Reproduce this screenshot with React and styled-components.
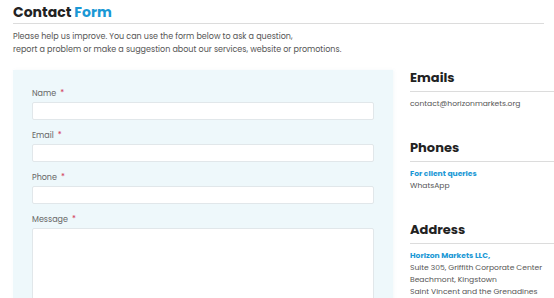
import React from "react";
import styled, { createGlobalStyle } from "styled-components";

const Global = createGlobalStyle`
  html, body { margin: 0; padding: 0; background: #fff; overflow: hidden; }
  body { font-family: "Poppins", "Inter", "Noto Sans", sans-serif; color: #555; }
  * { box-sizing: border-box; }
`;

const BLUE = "#1a98d5";

const Page = styled.div`
  width: 554px;
  height: 298px;
  padding: 4px 0 0 13px;
  overflow: hidden;
`;

const Header = styled.div`
  margin-right: 10px;
  border-bottom: 1px solid #dcdcdc;
  padding-bottom: 3px;
`;

const Title = styled.h1`
  margin: 0;
  font-size: 14px;
  line-height: 16px;
  font-weight: 700;
  color: #222;
`;

const Accent = styled.span`
  color: ${BLUE};
`;

const Intro = styled.p`
  margin: 6px 0 0;
  font-size: 8px;
  line-height: 13px;
  color: #555;
`;

const Columns = styled.div`
  display: flex;
  gap: 17px;
  margin-top: 14px;
`;

const FormPanel = styled.form`
  flex: 0 0 380px;
  height: 240px;
  background: #eef8fb;
  box-shadow: 1px 0 3px rgba(120, 160, 180, 0.08);
  padding: 18px 19px 0;
  display: flex;
  flex-direction: column;
  gap: 10px;
`;

const Field = styled.div`
  display: flex;
  flex-direction: column;
  gap: 2px;
`;

const Label = styled.label`
  font-size: 8px;
  line-height: 12px;
  color: #666;
`;

const Req = styled.span`
  color: #d23a5c;
  margin-left: 4px;
`;

const Input = styled.input`
  height: 18px;
  width: 100%;
  border: 1px solid #e1e7ea;
  border-radius: 2px;
  background: #fff;
  outline: none;
`;

const TextArea = styled.textarea`
  height: 90px;
  width: 100%;
  border: 1px solid #e1e7ea;
  border-radius: 2px;
  background: #fff;
  resize: none;
  outline: none;
`;

const Side = styled.aside`
  flex: 0 0 170px;
  display: flex;
  flex-direction: column;
  gap: 30px;
`;

const Section = styled.section``;

const SectionTitle = styled.h2`
  margin: 0;
  font-size: 13px;
  line-height: 16px;
  font-weight: 700;
  color: #222;
  padding-bottom: 4.5px;
  border-bottom: 1px solid #dcdcdc;
`;

const Body = styled.div`
  margin-top: 6.5px;
  font-size: 7.6px;
  line-height: 12px;
  color: #555;
`;

const Strong = styled.div`
  color: ${BLUE};
  font-weight: 700;
`;

const Line = styled.div``;

const fields = [
  { label: "Name", type: "text" },
  { label: "Email", type: "email" },
  { label: "Phone", type: "tel" },
];

export default function App() {
  return (
    <>
      <Global />
      <Page>
        <Header>
          <Title>
            Contact <Accent>Form</Accent>
          </Title>
        </Header>
        <Intro>
          Please help us improve. You can use the form below to ask a question,
          <br />
          report a problem or make a suggestion about our services, website or promotions.
        </Intro>
        <Columns>
          <FormPanel onSubmit={(e) => e.preventDefault()}>
            {fields.map((f) => (
              <Field key={f.label}>
                <Label>
                  {f.label}
                  <Req>*</Req>
                </Label>
                <Input type={f.type} />
              </Field>
            ))}
            <Field>
              <Label>
                Message
                <Req>*</Req>
              </Label>
              <TextArea />
            </Field>
          </FormPanel>
          <Side>
            <Section>
              <SectionTitle>Emails</SectionTitle>
              <Body>
                <Line>contact@horizonmarkets.org</Line>
              </Body>
            </Section>
            <Section>
              <SectionTitle>Phones</SectionTitle>
              <Body>
                <Strong>For client queries</Strong>
                <Line>WhatsApp</Line>
              </Body>
            </Section>
            <Section>
              <SectionTitle>Address</SectionTitle>
              <Body>
                <Strong>Horizon Markets LLC,</Strong>
                <Line>Suite 305, Griffith Corporate Center</Line>
                <Line>Beachmont, Kingstown</Line>
                <Line>Saint Vincent and the Grenadines</Line>
              </Body>
            </Section>
          </Side>
        </Columns>
      </Page>
    </>
  );
}
